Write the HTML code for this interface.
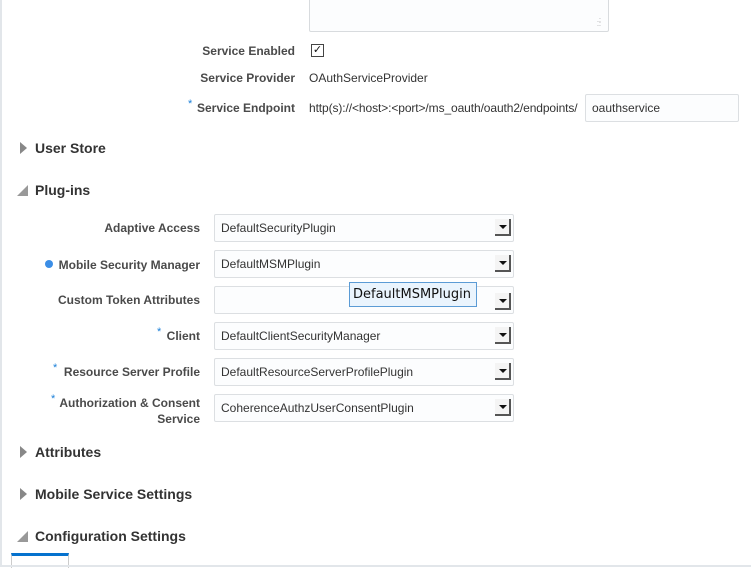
<!DOCTYPE html>
<html><head><style>
body{margin:0;width:751px;height:567px;background:#fff;position:relative;overflow:hidden;font-family:"Liberation Sans",Arial,sans-serif;}
.a{position:absolute;}
.lb{position:absolute;font-size:12px;font-weight:bold;color:#4a4a4a;text-align:right;white-space:nowrap;}
.tx{position:absolute;font-size:12px;color:#333;white-space:nowrap;}
.hd{position:absolute;left:35px;font-size:14px;font-weight:bold;color:#333;}
.tri{position:absolute;left:20px;width:0;height:0;border-top:6px solid transparent;border-bottom:6px solid transparent;border-left:7px solid #888;}
.dn{position:absolute;left:17px;width:0;height:0;border-left:11px solid transparent;border-bottom:11px solid #999;}
.sel{position:absolute;left:214px;width:298px;height:26px;border:1px solid #dcdfe2;border-radius:2px;background:#fcfdfe;font-size:12px;color:#333;line-height:26px;text-indent:6px;}
.btn{position:absolute;right:2px;top:4px;width:14px;height:15px;background:#f4f4f4;border-right:2px solid #555;border-bottom:2px solid #555;}
.btn:after{content:"";position:absolute;left:4px;top:6px;border-left:4px solid transparent;border-right:4px solid transparent;border-top:4px solid #111;}
.st{color:#1a7fd8;font-size:11px;position:absolute;}
</style></head><body>
<div class="a" style="left:0;top:0;width:2px;height:567px;background:#e2e6ea"></div>
<div class="a" style="left:309px;top:-5px;width:298px;height:35px;border:1px solid #d8dbde;border-radius:2px;background:#fcfdfe"></div>
<div class="a" style="left:597px;top:19px;font-size:7px;color:#999;line-height:4px">.:<br>.:</div>
<div class="lb" style="right:456px;top:44px">Service Enabled</div>
<div class="a" style="left:311px;top:44px;width:11px;height:11px;border:1px solid #444;font-size:11px;line-height:11px;text-align:center;color:#111">✓</div>
<div class="lb" style="right:456px;top:71px">Service Provider</div>
<div class="tx" style="left:309px;top:71px">OAuthServiceProvider</div>
<div class="st" style="left:188px;top:98px">*</div>
<div class="lb" style="right:456px;top:101px">Service Endpoint</div>
<div class="tx" style="left:309px;top:101px;letter-spacing:-0.1px">http(s)://&lt;host&gt;:&lt;port&gt;/ms_oauth/oauth2/endpoints/</div>
<div class="a" style="left:585px;top:94px;width:152px;height:26px;border:1px solid #dcdfe2;border-radius:2px;background:#fcfdfe;font-size:12px;line-height:27px;color:#333;text-indent:6px">oauthservice</div>

<div class="tri" style="top:142px"></div><div class="hd" style="top:140px">User Store</div>
<div class="dn" style="top:185px"></div><div class="hd" style="top:182px">Plug-ins</div>

<div class="lb" style="right:551px;top:221px">Adaptive Access</div>
<div class="sel" style="top:214px">DefaultSecurityPlugin<div class="btn"></div></div>
<div class="a" style="left:45px;top:260px;width:8px;height:8px;border-radius:50%;background:#3b8ee6"></div>
<div class="lb" style="right:551px;top:258px">Mobile Security Manager</div>
<div class="sel" style="top:250px">DefaultMSMPlugin<div class="btn"></div></div>
<div class="lb" style="right:551px;top:293px">Custom Token Attributes</div>
<div class="sel" style="top:286px"><div class="btn" style="top:6px"></div></div>
<div class="a" style="left:349px;top:282px;width:126px;height:23px;border:1px solid #5b9bd5;background:#eaf4fd;font-family:'DejaVu Sans',sans-serif;font-size:13px;line-height:23px;color:#111;text-indent:3px">DefaultMSMPlugin</div>
<div class="st" style="left:157px;top:326px">*</div>
<div class="lb" style="right:551px;top:329px">Client</div>
<div class="sel" style="top:322px">DefaultClientSecurityManager<div class="btn"></div></div>
<div class="st" style="left:53px;top:362px">*</div>
<div class="lb" style="right:551px;top:365px">Resource Server Profile</div>
<div class="sel" style="top:358px">DefaultResourceServerProfilePlugin<div class="btn"></div></div>
<div class="st" style="left:51px;top:393px">*</div>
<div class="lb" style="right:551px;top:395px;line-height:16px">Authorization &amp; Consent<br>Service</div>
<div class="sel" style="top:394px">CoherenceAuthzUserConsentPlugin<div class="btn"></div></div>

<div class="tri" style="top:446px"></div><div class="hd" style="top:444px">Attributes</div>
<div class="tri" style="top:488px"></div><div class="hd" style="top:486px">Mobile Service Settings</div>
<div class="dn" style="top:531px"></div><div class="hd" style="top:528px">Configuration Settings</div>
<div class="a" style="left:11px;top:553px;width:56px;height:12px;border:1px solid #ccc;border-top:3px solid #0572ce;border-bottom:none"></div>
<div class="a" style="left:0;top:565px;width:751px;height:2px;background:#e2e6ea"></div>
</body></html>
